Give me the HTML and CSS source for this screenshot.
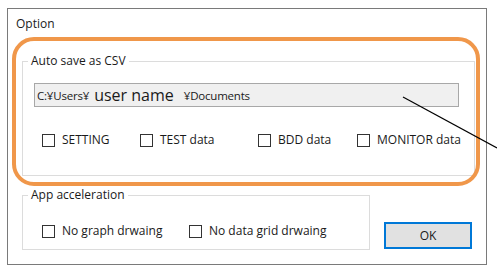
FILE: index.html
```html
<!DOCTYPE html>
<html lang="en">
<head>
    <meta charset="UTF-8">
    <meta name="viewport" content="width=device-width, initial-scale=1.0">
    <title>Option</title>
    <link rel="stylesheet" href="styles.css">
</head>
<body>
    <div class="dialog">
        <div class="title">Option</div>

        <fieldset class="group group-csv">
            <legend>Auto save as CSV</legend>
            <div class="path-box">C:¥Users¥<span class="user-name">user name</span>¥Documents</div>
            <div class="check-row csv-checks">
                <label class="check"><span class="box"></span>SETTING</label>
                <label class="check"><span class="box"></span>TEST data</label>
                <label class="check"><span class="box"></span>BDD data</label>
                <label class="check"><span class="box"></span>MONITOR data</label>
            </div>
        </fieldset>

        <div class="bottom">
            <fieldset class="group group-accel">
                <legend>App acceleration</legend>
                <div class="check-row accel-checks">
                    <label class="check"><span class="box"></span>No graph drwaing</label>
                    <label class="check"><span class="box"></span>No data grid drwaing</label>
                </div>
            </fieldset>
            <button class="ok">OK</button>
        </div>

        <!-- annotation -->
        <div class="highlight"></div>
    </div>

    <svg class="pointer" width="497" height="275">
        <line x1="403" y1="97" x2="497" y2="148" stroke="#000" stroke-width="1.2" />
    </svg>
</body>
</html>
```

FILE: styles.css
```css
body {
    margin: 0;
    background-color: #fff;
    font-family: "Open Sans", "Noto Sans", sans-serif;
    font-size: 12px;
    color: #1a1a1a;
}

.dialog {
    position: relative;
    box-sizing: border-box;
    width: 480px;
    height: 257px;
    margin: 8px 0 0 7px;
    border: 1px solid #7a7a7a;
    background-color: #fff;
}

.title {
    margin-top: 7px;
    padding-left: 8px;
    line-height: 16px;
}

.group {
    margin: 0 0 0 14px;
    padding: 0;
    border: 1px solid #dcdcdc;
    box-sizing: border-box;
}

.group legend {
    margin-left: 5px;
    padding: 0 3px;
    line-height: 16px;
}

.group-csv {
    width: 453px;
    margin-top: 21px;
    padding-bottom: 27px;
}

.path-box {
    box-sizing: border-box;
    width: 425px;
    height: 24px;
    margin: 14px 0 0 11px;
    padding-left: 2px;
    border: 1px solid #a8a8a8;
    background-color: #f0f0f0;
    display: flex;
    align-items: center;
    font-size: 11.5px;
    letter-spacing: -0.2px;
    white-space: pre;
}

.user-name {
    font-size: 16px;
    letter-spacing: 0;
    margin: 0 10px 0 5px;
}

.check-row {
    display: grid;
    margin-left: 19px;
    line-height: 16px;
}

.csv-checks {
    grid-template-columns: 98px 118px 99px auto;
    margin-top: 25px;
}

.accel-checks {
    grid-template-columns: 147px auto;
    margin-top: 20px;
}

.check {
    display: flex;
    align-items: center;
    gap: 7px;
    white-space: nowrap;
}

.box {
    box-sizing: border-box;
    width: 13px;
    height: 13px;
    border: 1px solid #333;
    background-color: #fff;
}

.bottom {
    display: flex;
    align-items: flex-end;
    margin-top: 11px;
}

.group-accel {
    width: 348px;
    padding-bottom: 10px;
}

.ok {
    box-sizing: border-box;
    width: 88px;
    height: 27px;
    margin: 0 0 1px 14px;
    border: 2px solid #0078d7;
    background-color: #e1e1e1;
    font-family: inherit;
    font-size: 12px;
    color: #1a1a1a;
}

.highlight {
    position: absolute;
    left: 4px;
    top: 28px;
    box-sizing: border-box;
    width: 468px;
    height: 149px;
    border: 4px solid #f0974a;
    border-radius: 22px;
    pointer-events: none;
}

.pointer {
    position: absolute;
    left: 0;
    top: 0;
    pointer-events: none;
}
```
